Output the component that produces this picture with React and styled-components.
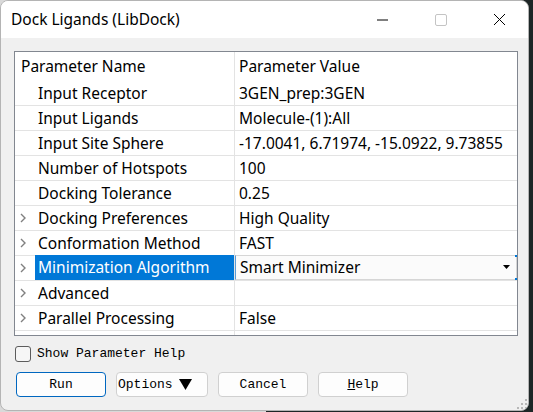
import React from 'react';
import styled, { createGlobalStyle } from 'styled-components';

const GlobalStyle = createGlobalStyle`
  html, body {
    margin: 0;
    padding: 0;
  }
  body {
    width: 533px;
    height: 412px;
    overflow: hidden;
    background: linear-gradient(to right, #d9d9d9 0, #d9d9d9 50%, #1d2626 50%);
    font-family: 'Noto Sans', 'Open Sans', sans-serif;
  }
`;

// window frame
const Window = styled.div`
  width: 529px;
  height: 411px;
  box-sizing: border-box;
  border: 1px solid #b4b4b4;
  border-radius: 8px;
  overflow: hidden;
  background: #f0f0f0;
  display: flex;
  flex-direction: column;
`;

const TitleBar = styled.div`
  height: 37px;
  flex-shrink: 0;
  background: #ffffff;
  display: flex;
  align-items: center;
  padding-left: 10px;
`;

const Title = styled.div`
  flex: 1;
  font-size: 15.5px;
  color: #000;
  padding-bottom: 1px;
`;

const WinControls = styled.div`
  display: flex;
  align-items: center;
  height: 100%;
`;

const WinButton = styled.div`
  width: 58px;
  height: 100%;
  display: flex;
  align-items: center;
  justify-content: center;
`;

const Body = styled.div`
  flex: 1;
  display: flex;
  flex-direction: column;
  padding: 13px 10px 0 13px;
  position: relative;
`;

// parameter table
const Table = styled.div`
  width: 504px;
  height: 285px;
  box-sizing: border-box;
  border: 1px solid #828790;
  background: linear-gradient(to right, transparent 219px, #e3e3e3 219px, #e3e3e3 220px, transparent 220px), #ffffff;
  display: flex;
  flex-direction: column;
`;

const HeaderRow = styled.div`
  height: 29px;
  display: grid;
  grid-template-columns: 220px 1fr;
  align-items: center;
  font-size: 15.5px;
  color: #000;
`;

const HeaderCell = styled.div`
  padding-left: ${p => (p.$value ? '4px' : '6px')};
  padding-bottom: 1px;
`;

const Row = styled.div`
  height: 24px;
  display: grid;
  grid-template-columns: 220px 1fr;
  border-bottom: 1px solid #e3e3e3;
  font-size: 15.5px;
  color: #000;
`;

const NameCell = styled.div`
  display: flex;
  align-items: stretch;
  padding-left: 5px;
  border-right: 1px solid #e3e3e3;
`;

const Expander = styled.div`
  width: 15px;
  display: flex;
  align-items: center;
`;

const Label = styled.div`
  flex: 1;
  display: flex;
  align-items: center;
  padding-left: 3px;
  padding-bottom: 1px;
  margin-top: ${p => (p.$selected ? '-1px' : '0')};
  background: ${p => (p.$selected ? '#0078d7' : 'transparent')};
  color: ${p => (p.$selected ? '#ffffff' : '#000000')};
  white-space: nowrap;
`;

const ValueCell = styled.div`
  display: flex;
  align-items: center;
  padding-left: 4px;
  padding-bottom: 1px;
  white-space: nowrap;
`;

const Combo = styled.div`
  position: relative;
  margin-top: -1px;
  display: flex;
  align-items: center;
  justify-content: space-between;
  padding: 0 6px 1px 4px;
  background: #fbfbfb;
  border: 1px solid #d6d6d6;
  border-left-color: #5b9bd5;
  white-space: nowrap;

  &::before,
  &::after {
    content: '';
    position: absolute;
    right: -1px;
    width: 2px;
    height: 2px;
    background: #0078d7;
  }
  &::before { top: -1px; }
  &::after { bottom: -1px; }
`;

// footer
const CheckRow = styled.label`
  display: flex;
  align-items: center;
  gap: 6px;
  margin-top: 9px;
  height: 17px;
  font-family: 'Liberation Mono', monospace;
  font-size: 13px;
  color: #000;
`;

const CheckBox = styled.span`
  width: 14px;
  height: 14px;
  border: 1px solid #5c5c5c;
  border-radius: 3px;
  background: #f6f6f6;
  margin-left: 1px;
`;

const ButtonRow = styled.div`
  display: flex;
  gap: 10px;
  margin-top: 10px;
  padding-left: 2px;
`;

const Button = styled.button`
  width: ${p => p.$w || 90}px;
  height: 25px;
  box-sizing: border-box;
  border: 1px solid ${p => (p.$default ? '#0067c0' : '#d0d0d0')};
  border-radius: 4px;
  background: #fdfdfd;
  font-family: 'Liberation Mono', monospace;
  font-size: 13px;
  color: #000;
  display: flex;
  align-items: center;
  justify-content: ${p => (p.$left ? 'flex-start' : 'center')};
  gap: 6px;
  padding: ${p => (p.$left ? '0 0 0 1px' : '0')};
  padding-bottom: 1px;
`;

const Grip = styled.svg`
  position: absolute;
  right: 1px;
  bottom: 1px;
`;

const ChevronIcon = () => (
  <svg width="7" height="10" viewBox="0 0 7 10">
    <polyline points="1,1 5,5 1,9" fill="none" stroke="#808080" strokeWidth="1.4" />
  </svg>
);

const params = [
  { name: 'Input Receptor', value: '3GEN_prep:3GEN' },
  { name: 'Input Ligands', value: 'Molecule-(1):All' },
  { name: 'Input Site Sphere', value: '-17.0041, 6.71974, -15.0922, 9.73855' },
  { name: 'Number of Hotspots', value: '100' },
  { name: 'Docking Tolerance', value: '0.25' },
  { name: 'Docking Preferences', value: 'High Quality', group: true },
  { name: 'Conformation Method', value: 'FAST', group: true },
  { name: 'Minimization Algorithm', value: 'Smart Minimizer', group: true, selected: true },
  { name: 'Advanced', value: '', group: true },
  { name: 'Parallel Processing', value: 'False', group: true },
];

const App = () => {
  return (
    <>
      <GlobalStyle />
      <Window>
        <TitleBar>
          <Title>Dock Ligands (LibDock)</Title>
          <WinControls>
            <WinButton>
              <svg width="12" height="2" viewBox="0 0 12 2">
                <line x1="0" y1="1" x2="11" y2="1" stroke="#000" strokeWidth="1" />
              </svg>
            </WinButton>
            <WinButton>
              <svg width="12" height="12" viewBox="0 0 12 12">
                <rect x="0.5" y="0.5" width="11" height="11" rx="1.5" fill="none" stroke="#c4c4c4" strokeWidth="1" />
              </svg>
            </WinButton>
            <WinButton>
              <svg width="13" height="13" viewBox="0 0 13 13">
                <path d="M1 1 L12 12 M12 1 L1 12" stroke="#000" strokeWidth="1" />
              </svg>
            </WinButton>
          </WinControls>
        </TitleBar>
        <Body>
          <Table>
            <HeaderRow>
              <HeaderCell>Parameter Name</HeaderCell>
              <HeaderCell $value>Parameter Value</HeaderCell>
            </HeaderRow>
            {params.map(p => (
              <Row key={p.name}>
                <NameCell>
                  <Expander>{p.group && <ChevronIcon />}</Expander>
                  <Label $selected={p.selected}>{p.name}</Label>
                </NameCell>
                {p.selected ? (
                  <Combo>
                    <span>{p.value}</span>
                    <svg width="7" height="4" viewBox="0 0 7 4">
                      <polygon points="0,0 7,0 3.5,4" fill="#000" />
                    </svg>
                  </Combo>
                ) : (
                  <ValueCell>{p.value}</ValueCell>
                )}
              </Row>
            ))}
          </Table>
          <CheckRow>
            <CheckBox />
            Show Parameter Help
          </CheckRow>
          <ButtonRow>
            <Button $default>Run</Button>
            <Button $w={92} $left>
              Options
              <svg width="13" height="11" viewBox="0 0 13 11">
                <polygon points="0,0 13,0 6.5,11" fill="#000" />
              </svg>
            </Button>
            <Button>Cancel</Button>
            <Button><span><u>H</u>elp</span></Button>
          </ButtonRow>
          <Grip width="10" height="10" viewBox="0 0 10 10">
            <rect x="8" y="0" width="2" height="2" fill="#b8b8b8" />
            <rect x="4" y="4" width="2" height="2" fill="#b8b8b8" />
            <rect x="8" y="4" width="2" height="2" fill="#b8b8b8" />
            <rect x="0" y="8" width="2" height="2" fill="#b8b8b8" />
            <rect x="4" y="8" width="2" height="2" fill="#b8b8b8" />
            <rect x="8" y="8" width="2" height="2" fill="#b8b8b8" />
          </Grip>
        </Body>
      </Window>
    </>
  );
};

export default App;
